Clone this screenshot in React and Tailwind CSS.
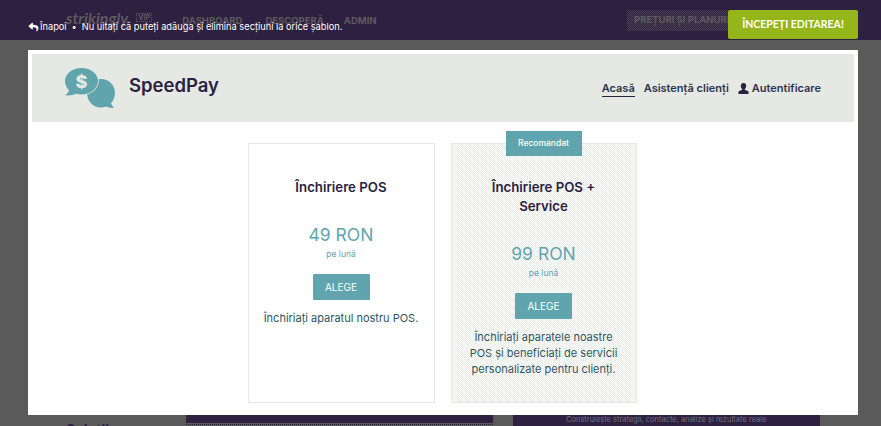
import React from "react";
import { FaReply } from "react-icons/fa";

const font = { fontFamily: "Inter, sans-serif" };

function Logo() {
  return (
    <svg width="52" height="42" viewBox="0 0 52 42" className="shrink-0">
      <path d="M37 12c7.700 0 14 6 14 14 0 4-1.500 7.500-4 10 .6 2 1.800 3.500 3 5-3 .3-6-.3-8-1.400-1.600.6-3.300.9-5 .9-7.700 0-14-6-14-14.500S29.300 12 37 12z" fill="#60a5ae" />
      <path d="M17.500 1C26.600 1 34 6.800 34 14s-7.400 13.500-16.500 13.500c-2 0-3.800-.3-5.500-.8C9.500 28 5 28.800 1 28.300c2-1.300 3.500-3.100 4.100-5.100C2.600 20.900 1 17.700 1 14 1 6.800 8.400 1 17.500 1z" fill="#60a5ae" stroke="#e6e8e3" strokeWidth="1.500" paintOrder="stroke" />
      <text x="17.500" y="20.500" textAnchor="middle" fill="#e6e8e3" fontSize="18" fontWeight="800" fontFamily="Inter, sans-serif">$</text>
    </svg>
  );
}

function UserGlyph() {
  return (
    <svg width="11" height="11" viewBox="0 0 11 11" fill="#2b2140" className="shrink-0">
      <path d="M5.500 0C7.200 0 8.200 1.200 8.200 3c0 1.300-.6 2.400-1.300 3v1c1.500.5 3.100.9 3.600 1.600V11H.5V8.600C1 7.900 2.600 7.500 4.100 7V6C3.400 5.400 2.800 4.300 2.800 3 2.800 1.200 3.800 0 5.500 0z" />
    </svg>
  );
}

function PriceCard({ title, price, note, lines, featured }) {
  return (
    <div
      className={
        "relative h-[260px] border border-[#e6e8e3] flex flex-col items-center text-center " +
        (featured
          ? "w-[186px] bg-[repeating-conic-gradient(#e9ebe6_0_25%,#ffffff_0_50%)] bg-[length:2px_2px]"
          : "w-[187px] bg-white")
      }
    >
      {featured && (
        <div className="absolute top-[-13px] left-[54px] w-[76px] h-[25px] bg-[#60a5ae] text-white text-[8.500px] font-medium flex items-center justify-center pb-[1px]">
          Recomandat
        </div>
      )}
      <h3 className="mt-[34px] w-[130px] text-[13.250px] leading-[19px] font-semibold text-[#2b2140] whitespace-pre-line">{title}</h3>
      <div className="mt-[25px] text-[17.500px] leading-[26px] text-[#60a5ae]">{price}</div>
      <div className="text-[8.500px] leading-[12px] text-[#60a5ae]">{note}</div>
      <button className="mt-[14px] w-[57px] h-[26px] rounded-[1px] bg-[#60a5ae] text-white text-[10px] font-normal">
        ALEGE
      </button>
      <div className="mt-[10px] text-[11px] leading-[16px] text-[#2f5562]">
        {lines.map((l) => (
          <div key={l}>{l}</div>
        ))}
      </div>
    </div>
  );
}

export default function App() {
  return (
    <div className="relative h-[426px] w-[881px] overflow-hidden bg-[#5a5a5a]" style={font}>
      {/* site nav, dimmed behind the editor overlay */}
      <div className="h-[40px] bg-[#2d2040] flex items-start text-[#5e5a60] font-bold">
        <div className="ml-[66px] mt-[10px] text-[16px] leading-[16px] italic" style={{ fontFamily: "Lato, sans-serif" }}>
          strikingly
        </div>
        <div className="ml-[8px] mt-[13px] w-[16px] h-[9px] border border-dotted border-[#5e5a60] text-[7px] leading-[8px] text-center">
          VIP
        </div>
        <div className="ml-[30px] mt-[15px] text-[9.500px] leading-[12px]">DASHBOARD</div>
        <div className="ml-[23px] mt-[15px] text-[9.500px] leading-[12px]">DESCOPERĂ</div>
        <div className="ml-[20px] mt-[15px] text-[9.500px] leading-[12px]">ADMIN</div>
        <div className="ml-auto mt-[10px] w-[101px] h-[21px] pl-[7px] text-[9.500px] leading-[20px] whitespace-nowrap overflow-hidden bg-[repeating-conic-gradient(#4a4250_0_25%,#2d2040_0_50%)] bg-[length:2px_2px]">
          PREȚURI ȘI PLANURI
        </div>
        <button
          className="mr-[23px] mt-[10px] w-[130px] h-[29px] rounded-[2px] bg-[#94b61b] text-white text-[10.500px] font-bold"
          style={{ fontFamily: "Lato, sans-serif" }}
        >
          ÎNCEPEȚI EDITAREA!
        </button>
      </div>

      {/* editor hint over the nav */}
      <div className="absolute left-[28px] top-[20px] flex items-center text-white text-[9.250px] leading-[14px] whitespace-nowrap">
        <FaReply className="w-[11px] h-[10px] mr-[1px]" />
        <span>Înapoi</span>
        <span className="mx-[5px]">•</span>
        <span>Nu uitați că puteți adăuga și elimina secțiuni la orice șablon.</span>
      </div>

      {/* preview modal */}
      <div className="mt-[10px] ml-[28px] w-[830px] h-[365px] bg-white p-[4px]">
        <div className="h-[68px] bg-[#e6e8e3] flex items-center pl-[32px] pr-[33px]">
          <Logo />
          <div className="ml-[13px] mb-[5px] text-[18.500px] font-semibold text-[#2b2140]">SpeedPay</div>
          <div className="ml-auto flex items-center text-[11px] font-semibold text-[#2b3550]">
            <span className="border-b border-[#2b2140] leading-[15px] pt-[1px]">Acasă</span>
            <span className="ml-[9px]">Asistență clienți</span>
            <span className="ml-[9px] mr-[3px]"><UserGlyph /></span>
            <span>Autentificare</span>
          </div>
        </div>
        <div className="mt-[21px] flex justify-center gap-[16px] pr-[2px]">
          <PriceCard
            title="Închiriere POS"
            price="49 RON"
            note="pe lună"
            lines={["Închiriați aparatul nostru POS."]}
          />
          <PriceCard
            featured
            title={"Închiriere POS  +\nService"}
            price="99 RON"
            note="pe lună"
            lines={["Închiriați aparatele noastre", "POS și beneficiați de servicii", "personalizate pentru clienți."]}
          />
        </div>
      </div>

      {/* page content peeking out below */}
      <div className="flex h-[11px]">
        <div className="w-[186px] pl-[66px] pt-[6px] text-[14px] leading-[18px] font-bold text-[#2d2040] overflow-hidden">
          Soluții
        </div>
        <div className="w-[307px]">
          <div className="h-[8px] bg-[#2d2040]" />
          <div className="h-[1px] mt-[1px] border-t border-dotted border-[#2d2040]" />
        </div>
        <div className="ml-[20px] w-[307px] h-[11px] bg-[#2d2040] text-[#77727d] text-[7.500px] leading-[9px] pl-[53px] whitespace-nowrap overflow-hidden">
          Construiește strategii, contacte, analize și rezultate reale
        </div>
      </div>
    </div>
  );
}
